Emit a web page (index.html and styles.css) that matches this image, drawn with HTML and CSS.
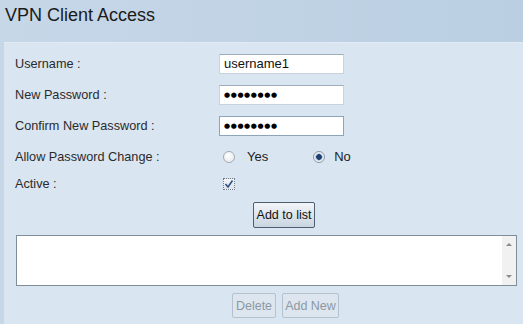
FILE: index.html
```html
<!DOCTYPE html>
<html lang="en">
<head>
    <meta charset="UTF-8">
    <title>VPN Client Access</title>
    <link rel="stylesheet" href="styles.css">
</head>
<body>
    <div class="page">
        <h1 class="title">VPN Client Access</h1>

        <!-- Formulario de usuarios VPN -->
        <form class="panel">
            <div class="row">
                <label class="label">Username :</label>
                <input class="field" type="text" value="username1">
            </div>
            <div class="row">
                <label class="label">New Password :</label>
                <input class="field dots" type="text" value="●●●●●●●●">
            </div>
            <div class="row">
                <label class="label">Confirm New Password :</label>
                <input class="field dots focus" type="text" value="●●●●●●●●">
            </div>
            <div class="row">
                <label class="label">Allow Password Change :</label>
                <div class="radios">
                    <label class="radio"><input type="radio" name="allow"><span>Yes</span></label>
                    <label class="radio"><input type="radio" name="allow" checked><span>No</span></label>
                </div>
            </div>
            <div class="row short">
                <label class="label">Active :</label>
                <span class="check">
                    <svg width="10" height="10" viewBox="0 0 10 10">
                        <path d="M1.5 5 L4 8 L8.5 1.5" fill="none" stroke="#2f4f86" stroke-width="1.6"/>
                    </svg>
                </span>
            </div>

            <div class="actions">
                <button type="button" class="button add">Add to list</button>
            </div>

            <div class="list">
                <div class="list-body"></div>
                <div class="scroll">
                    <span class="arrow up"></span>
                    <span class="arrow down"></span>
                </div>
            </div>

            <div class="actions bottom">
                <button type="button" class="button del" disabled>Delete</button>
                <button type="button" class="button new" disabled>Add New</button>
            </div>
        </form>
    </div>
</body>
</html>
```

FILE: styles.css
```css
/* Estilos gerais */
body {
    margin: 0;
    font-family: "Liberation Sans", Arial, sans-serif;
    background-color: #c2d4e7;
}

.page {
    width: 523px;
    height: 324px;
    overflow: hidden;
    background: linear-gradient(to right, #c6d7e8, #bacfe2);
}

.title {
    margin: 0;
    height: 42px;
    padding: 5px 0 0 5px;
    box-sizing: border-box;
    font-size: 18px;
    font-weight: normal;
    color: #1a1a1a;
}

.panel {
    margin-left: 4px;
    height: 282px;
    padding: 5px 0 0 11px;
    box-sizing: border-box;
    background-color: #d9e5f1;
    border-top: 1px solid #e2ebf4;
}

.row {
    display: flex;
    align-items: center;
    height: 31px;
}

.row.short {
    height: 24px;
}

.label {
    width: 204px;
    font-size: 12.7px;
    color: #2b2b2b;
}

.field {
    width: 125px;
    height: 20px;
    box-sizing: border-box;
    margin: 0;
    padding: 0 4px;
    border: 1px solid #c9d3dc;
    border-top-color: #9fadbb;
    background: #ffffff;
    font-family: "Liberation Sans", Arial, sans-serif;
    font-size: 13px;
    color: #111;
    outline: none;
}

.field.dots {
    font-family: "DejaVu Sans", sans-serif;
    font-size: 7px;
    letter-spacing: 0.6px;
    color: #000;
}

.field.focus {
    border-color: #8ea4b8;
}

/* Radios */
.radios {
    display: flex;
    gap: 45px;
    margin-left: 4px;
}

.radio {
    display: flex;
    align-items: center;
    gap: 12px;
    font-size: 13px;
    color: #222;
}

.radio input {
    appearance: none;
    margin: 0;
    width: 12px;
    height: 12px;
    border-radius: 50%;
    border: 1px solid #a3abb3;
    background: radial-gradient(circle at 40% 35%, #ffffff, #e3e6e9);
}

.radio input:checked {
    background: radial-gradient(circle, #1f3f70 0 2.5px, #8ea8c8 3px, #eef2f6 4px);
    border-color: #8b97a3;
}

.radio input:checked + span {
    margin-left: -3px;
}

.check {
    display: flex;
    align-items: center;
    justify-content: center;
    margin-left: 4px;
    width: 12px;
    height: 12px;
    box-sizing: border-box;
    border: 1px dotted #6f7b87;
    background: linear-gradient(#f4f6f8, #dde3e9);
}

/* Botoes */
.actions {
    display: flex;
    gap: 6px;
    margin-top: 6px;
}

.button {
    height: 26px;
    padding: 0;
    border: 1px solid #4e5e6e;
    border-radius: 2px;
    background: linear-gradient(#f2f5f8, #c9d5e0);
    font-family: "Liberation Sans", Arial, sans-serif;
    font-size: 12.5px;
    color: #111;
}

.button.add {
    width: 62px;
    margin-left: 238px;
}

.button:disabled {
    border-color: #b4c2cf;
    background: #dde6ef;
    color: #8c98a3;
}

.button.del {
    width: 44px;
    margin-left: 217px;
}

.button.new {
    width: 57px;
}

/* Lista */
.list {
    display: flex;
    width: 501px;
    height: 51px;
    box-sizing: border-box;
    margin: 7px 0 0 1px;
    border: 1px solid #7f8d99;
    background: #ffffff;
}

.list-body {
    flex: 1;
}

.scroll {
    width: 14px;
    display: flex;
    flex-direction: column;
    justify-content: space-between;
    align-items: center;
    padding: 7px 0;
    box-sizing: border-box;
    background: #f1f1f1;
}

.arrow {
    width: 0;
    height: 0;
    border-left: 3px solid transparent;
    border-right: 3px solid transparent;
}

.arrow.up {
    border-bottom: 3px solid #8a8a8a;
}

.arrow.down {
    border-top: 3px solid #8a8a8a;
}

.actions.bottom {
    margin-top: 7px;
}

.actions.bottom .button {
    height: 25px;
}
```
